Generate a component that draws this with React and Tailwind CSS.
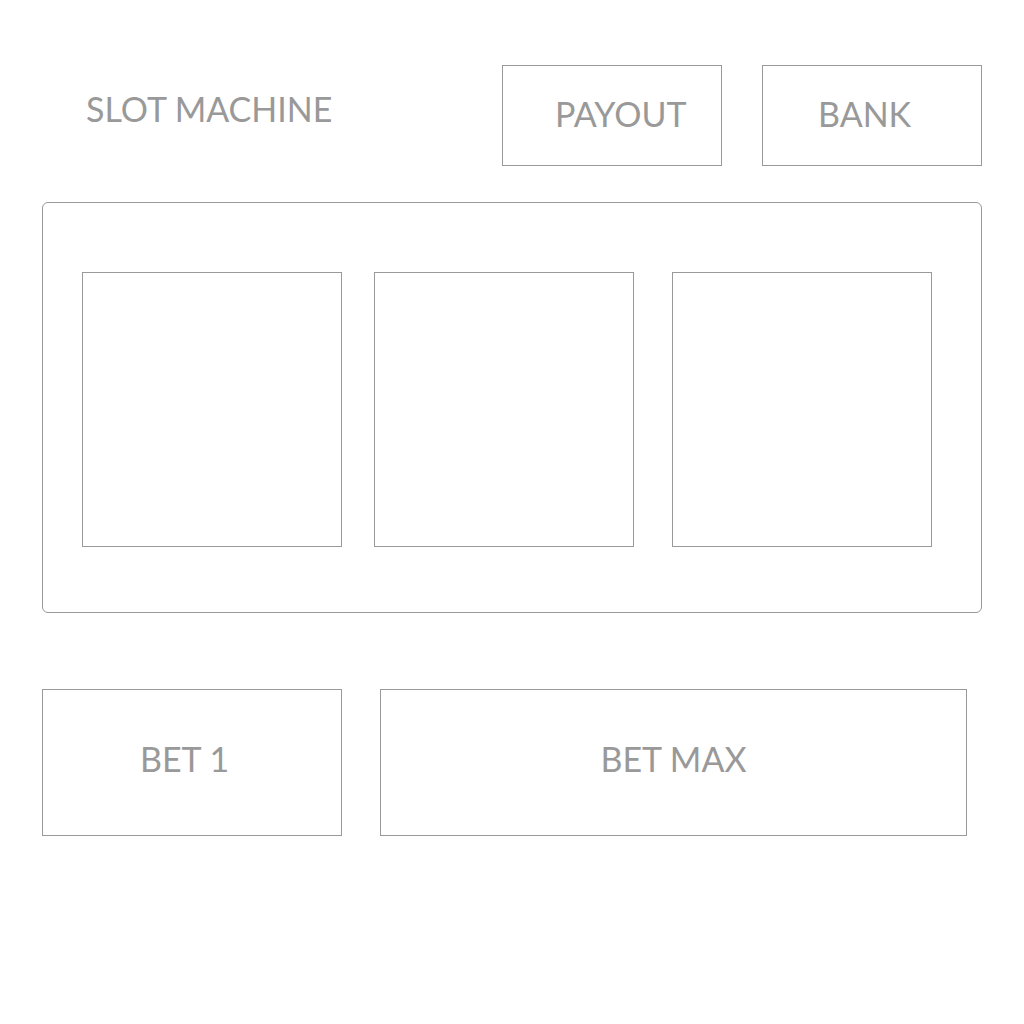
import React from 'react';

const reels = ['ml-0', 'ml-[32px]', 'ml-[38px]'];

function App() {
  return (
    <div className="w-[1024px] h-[1024px] bg-white text-[#999999] font-['Lato',sans-serif] overflow-hidden">
      {/* header */}
      <div className="flex mt-[65px] h-[101px]">
        <div className="w-[502px] pl-[86px] pt-[27px] text-[34px] leading-none">SLOT MACHINE</div>
        <div className="w-[220px] border border-[#999999] flex items-center pl-[52px] pb-[4px] text-[34px]">
          PAYOUT
        </div>
        <div className="w-[220px] ml-[40px] border border-[#999999] flex items-center pl-[55px] pb-[4px] text-[34px]">
          BANK
        </div>
      </div>

      {/* reels panel */}
      <div className="ml-[42px] mt-[36px] w-[940px] h-[411px] border border-[#999999] rounded-md pl-[39px] pt-[69px] flex items-start">
        {reels.map((m, i) => (
          <div key={i} className={`${m} w-[260px] h-[275px] border border-[#999999]`} />
        ))}
      </div>

      {/* bet buttons */}
      <div className="flex ml-[42px] mt-[76px] h-[147px]">
        <div className="w-[300px] border border-[#999999] flex items-center pl-[97px] pb-[8px] text-[34px]">
          BET 1
        </div>
        <div className="w-[587px] ml-[38px] border border-[#999999] flex items-center justify-center pb-[8px] text-[34px]">
          BET MAX
        </div>
      </div>
    </div>
  );
}

export default App;
